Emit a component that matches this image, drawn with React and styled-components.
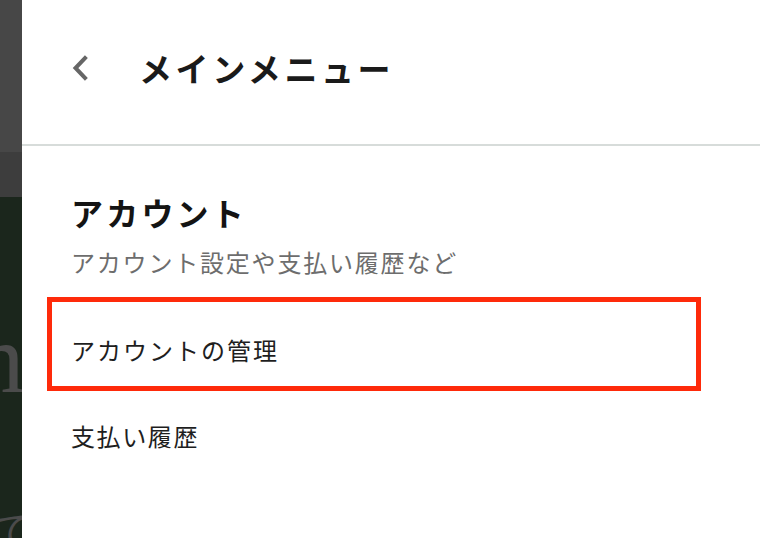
import React from 'react';
import styled, { createGlobalStyle } from 'styled-components';

const GlobalStyle = createGlobalStyle`
  html, body {
    margin: 0;
    padding: 0;
    background: #ffffff;
    overflow: hidden;
  }
  body {
    font-family: "Noto Sans CJK JP", "Noto Sans", sans-serif;
  }
`;

const Screen = styled.div`
  display: flex;
  width: 760px;
  height: 538px;
  overflow: hidden;
`;

const Backdrop = styled.div`
  width: 22px;
  flex-shrink: 0;
  display: flex;
  flex-direction: column;
  overflow: hidden;
`;

const BackdropBand = styled.div`
  height: ${(p) => p.h}px;
  flex-shrink: 0;
  background: ${(p) => p.bg};
`;

const BackdropPhoto = styled.div`
  flex: 1;
  background: #1b261c;
  display: flex;
  flex-direction: column;
  align-items: flex-end;
`;

const GhostLetter = styled.span`
  display: flex;
  justify-content: flex-end;
  width: 22px;
  white-space: nowrap;
  font-family: "Liberation Serif", serif;
  font-size: ${(p) => p.size}px;
  line-height: 1;
  color: #4b4b4b;
  margin-top: ${(p) => p.top}px;
  margin-right: ${(p) => p.shift || 0}px;
`;

const Panel = styled.div`
  flex: 1;
  background: #ffffff;
  display: flex;
  flex-direction: column;
`;

const Header = styled.header`
  height: 146px;
  flex-shrink: 0;
  display: flex;
  align-items: center;
  padding: 0 0 8px 50px;
  box-sizing: border-box;
  border-bottom: 2px solid #d7dcda;
`;

const BackButton = styled.button`
  display: flex;
  align-items: center;
  justify-content: center;
  padding: 0;
  border: none;
  background: none;
  width: 16px;
  height: 26px;
  cursor: pointer;
`;

const Title = styled.h1`
  margin: 0 0 0 51px;
  font-size: 33px;
  line-height: 40px;
  font-weight: 700;
  letter-spacing: 3.6px;
  color: #1a1a1a;
`;

const Content = styled.section`
  display: flex;
  flex-direction: column;
  padding: 46px 59px 0 25px;
`;

const SectionTitle = styled.h2`
  margin: 0 0 0 24px;
  font-size: 32px;
  line-height: 40px;
  font-weight: 700;
  letter-spacing: 3.2px;
  color: #141414;
`;

const SectionNote = styled.p`
  margin: 14px 0 0 24px;
  font-size: 24px;
  line-height: 32px;
  letter-spacing: 1.8px;
  color: #6d6d6d;
`;

const MenuList = styled.ul`
  list-style: none;
  margin: 19px 0 0;
  padding: 0;
  display: flex;
  flex-direction: column;
`;

const MenuItem = styled.li`
  font-size: 24px;
  line-height: 32px;
  letter-spacing: ${(p) => (p.highlighted ? '2px' : '1.6px')};
  color: #1e1e1e;
  border: ${(p) => (p.highlighted ? '5px solid #fe2a0a' : 'none')};
  padding: ${(p) => (p.highlighted ? '32px 21px 20px 19px' : '29px 26px 0 24px')};
`;

const ChevronLeft = () => (
  <svg width="16" height="26" viewBox="0 0 16 26" fill="none">
    <polyline
      points="13,3 3.5,13 13,23"
      stroke="#666666"
      strokeWidth="4"
      strokeLinecap="square"
      strokeLinejoin="miter"
    />
  </svg>
);

export default function App() {
  return (
    <>
      <GlobalStyle />
      <Screen>
        <Backdrop>
          <BackdropBand h={152} bg="#474747" />
          <BackdropBand h={45} bg="#3d3d3d" />
          <BackdropPhoto>
            <GhostLetter size={100} top={112} shift={-3}>m</GhostLetter>
            <GhostLetter size={44} top={100} shift={-14}>で</GhostLetter>
          </BackdropPhoto>
        </Backdrop>
        <Panel>
          <Header>
            <BackButton aria-label="戻る">
              <ChevronLeft />
            </BackButton>
            <Title>メインメニュー</Title>
          </Header>
          <Content>
            <SectionTitle>アカウント</SectionTitle>
            <SectionNote>アカウント設定や支払い履歴など</SectionNote>
            <MenuList>
              <MenuItem highlighted>アカウントの管理</MenuItem>
              <MenuItem>支払い履歴</MenuItem>
            </MenuList>
          </Content>
        </Panel>
      </Screen>
    </>
  );
}
